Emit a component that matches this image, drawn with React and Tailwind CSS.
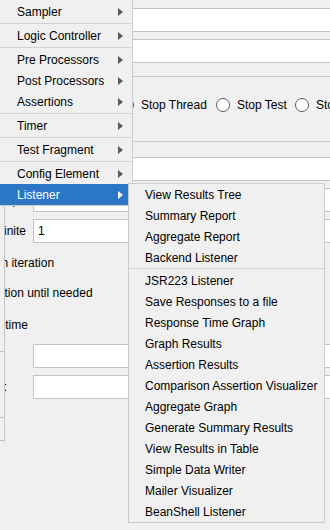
import React from 'react';

const mainItems = [
  'Sampler', '-', 'Logic Controller', '-', 'Pre Processors', 'Post Processors', 'Assertions', '-',
  'Timer', '-', 'Test Fragment', '-', 'Config Element', 'Listener',
];

const listenerItems = [
  'View Results Tree', 'Summary Report', 'Aggregate Report', 'Backend Listener', '-',
  'JSR223 Listener', 'Save Responses to a file', 'Response Time Graph', 'Graph Results',
  'Assertion Results', 'Comparison Assertion Visualizer', 'Aggregate Graph',
  'Generate Summary Results', 'View Results in Table', 'Simple Data Writer',
  'Mailer Visualizer', 'BeanShell Listener',
];

const Arrow = ({ white }) => (
  <svg width="5" height="8" viewBox="0 0 5 8">
    <path d="M0 0L5 4L0 8Z" fill={white ? '#ffffff' : '#5a5a5a'} />
  </svg>
);

const Radio = () => (
  <span className="w-[14px] h-[14px] shrink-0 rounded-full border border-[#5a5a5a] bg-white" />
);

const Field = ({ children, className = '' }) => (
  <div className={`h-[24px] flex items-center pl-[4px] bg-white border border-r-0 border-[#c4c4c4] ${className}`}>
    {children}
  </div>
);

const MainMenu = () => (
  <div className="absolute left-0 top-0 w-[133px] pt-px bg-[#f0f0f0] border-r border-b border-[#cccccc]">
    {mainItems.map((item, i) => {
      if (item === '-') {
        return (
          <div key={i} className="py-px">
            <div className="h-px bg-[#d2d2d2]" />
          </div>
        );
      }
      const active = item === 'Listener';
      return (
        <div
          key={i}
          className={`h-[21px] flex items-center justify-between pl-[17px] pr-[9px] ${active ? 'bg-[#2c77c5] text-white' : 'text-black'}`}
        >
          <span>{item}</span>
          <Arrow white={active} />
        </div>
      );
    })}
  </div>
);

const ListenerMenu = () => (
  <div className="absolute left-[128px] top-[183px] w-[197px] bg-[#f0f0f0] border border-[#cccccc]">
    {listenerItems.map((item, i) =>
      item === '-' ? (
        <div key={i} className="h-px mb-px bg-[#d2d2d2]" />
      ) : (
        <div key={i} className="h-[21px] flex items-center pl-[16px] text-black whitespace-nowrap">
          {item}
        </div>
      )
    )}
  </div>
);

export default function App() {
  return (
    <div className="relative w-[330px] h-[530px] overflow-hidden bg-[#f0f0f0] text-[12px] text-black font-['Liberation_Sans',sans-serif]">
      {/* thread group panel behind the menus */}
      <div className="pt-[8px]">
        <Field className="ml-[100px]" />
        <Field className="ml-[100px] mt-[7px]" />
        <div className="mt-[13px] h-px bg-[#cdcdcd]" />

        <div className="mt-[20px] h-[15px] flex items-center pl-[120px] whitespace-nowrap">
          <Radio />
          <span className="ml-[7px] w-[75px] shrink-0">Stop Thread</span>
          <Radio />
          <span className="ml-[7px] w-[58px] shrink-0">Stop Test</span>
          <Radio />
          <span className="ml-[7px]">Stop Test Now</span>
        </div>

        <div className="mt-[29px] h-px bg-[#cdcdcd]" />
        <Field className="ml-[100px] mt-[15px]" />

        <div className="flex h-[260px]">
          <div className="w-[5px] shrink-0 flex flex-col border-r border-[#c4c4c4]">
            <div className="h-[170px]" />
            <div className="h-px bg-[#c4c4c4]" />
            <div className="h-[65px]" />
            <div className="h-px bg-[#c4c4c4]" />
            <div className="h-[22px]" />
            <div className="h-px bg-[#c4c4c4]" />
          </div>

          <div className="flex-1 min-w-0 overflow-hidden flex flex-col whitespace-nowrap">
            <div className="mt-[7px] flex items-center">
              <div className="w-[15px] shrink-0 overflow-hidden flex justify-end">
                <span>Ramp-up period (seconds):</span>
              </div>
              <Field className="ml-[13px] flex-1" />
            </div>
            <div className="mt-[7px] flex items-center">
              <div className="w-[21px] shrink-0 overflow-hidden flex justify-end">
                <span>Infinite</span>
              </div>
              <Field className="ml-[7px] flex-1">1</Field>
            </div>

            <div className="mt-[10px] h-[20px] flex items-center">
              <span className="-ml-[101px]">Same user on each iteration</span>
            </div>
            <div className="mt-[10px] h-[20px] flex items-center">
              <span className="-ml-[99px]">Delay Thread creation until needed</span>
            </div>
            <div className="mt-[12px] h-[20px] flex items-center">
              <span className="-ml-[99px]">Specify Thread lifetime</span>
            </div>

            <div className="mt-[9px] flex items-center">
              <span className="-ml-[128px] w-[136px] shrink-0">Duration (seconds):</span>
              <Field className="ml-[20px] flex-1" />
            </div>
            <div className="mt-[7px] flex items-center">
              <span className="-ml-[128px] w-[136px] shrink-0">Startup delay (seconds):</span>
              <Field className="ml-[20px] flex-1" />
            </div>
          </div>
        </div>
      </div>

      <MainMenu />
      <ListenerMenu />
    </div>
  );
}
